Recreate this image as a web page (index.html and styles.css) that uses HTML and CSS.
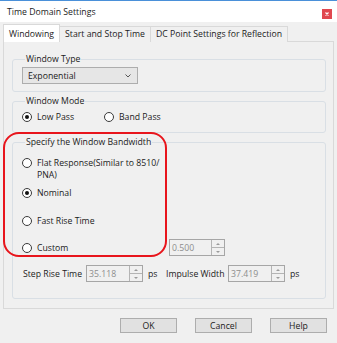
FILE: index.html
```html
<!DOCTYPE html>
<html>
<head>
<meta charset="utf-8">
<link rel="stylesheet" href="styles.css">
</head>
<body>
<div class="dialog">
  <div class="titlebar">
    <span class="title">Time Domain Settings</span>
    <span class="close"><svg width="10" height="10" viewBox="0 0 10 10"><path d="M3.5 3.5L6.5 6.5M6.5 3.5L3.5 6.5" stroke="#fff" stroke-width="1.2"/></svg></span>
  </div>
  <div class="tabs">
    <div class="tab active">Windowing</div>
    <div class="tab">Start and Stop Time</div>
    <div class="tab">DC Point Settings for Reflection</div>
  </div>
  <div class="panel">
    <fieldset class="group g-type">
      <legend>Window Type</legend>
      <div class="select">
        <span>Exponential</span>
        <svg width="6" height="4" viewBox="0 0 6 4"><path d="M0.5 0.5L3 3L5.5 0.5" fill="none" stroke="#555" stroke-width="1"/></svg>
      </div>
    </fieldset>
    <fieldset class="group g-mode">
      <legend>Window Mode</legend>
      <div class="mode-row">
        <div class="radio checked"><span class="circle"></span><span>Low Pass</span></div>
        <div class="radio"><span class="circle"></span><span>Band Pass</span></div>
      </div>
    </fieldset>
    <fieldset class="group g-bw">
      <legend>Specify the Window Bandwidth</legend>
      <div class="radio multi r-flat"><span class="circle"></span><span>Flat Response(Similar to 8510/<br>PNA)</span></div>
      <div class="radio checked r-nominal"><span class="circle"></span><span>Nominal</span></div>
      <div class="radio r-fast"><span class="circle"></span><span>Fast Rise Time</span></div>
      <div class="custom-row">
        <div class="radio r-custom"><span class="circle"></span><span>Custom</span></div>
        <div class="spin w-custom"><span class="val">0.500</span><span class="arrows"><i class="up"></i><i class="down"></i></span></div>
      </div>
      <div class="rise-row">
        <span class="lbl">Step Rise Time</span>
        <div class="spin"><span class="val">35.118</span><span class="arrows"><i class="up"></i><i class="down"></i></span></div>
        <span class="unit">ps</span>
        <span class="lbl">Impulse Width</span>
        <div class="spin"><span class="val">37.419</span><span class="arrows"><i class="up"></i><i class="down"></i></span></div>
        <span class="unit">ps</span>
      </div>
    </fieldset>
  </div>
  <div class="buttons">
    <div class="btn">OK</div>
    <div class="btn">Cancel</div>
    <div class="btn">Help</div>
  </div>
  <div class="highlight"></div>
</div>
</body>
</html>
```
FILE: styles.css
```css
* { box-sizing: border-box; }
html, body { margin: 0; padding: 0; }
body {
  font-family: "Open Sans", "Noto Sans", sans-serif;
  font-size: 8.7px;
  line-height: 12px;
  color: #1b1b1b;
  background: #f0f0f0;
}
.dialog {
  position: relative;
  width: 337px;
  height: 343px;
  background: #f0f0f0;
  border-top: 1px solid #4a90d9;
  display: flex;
  flex-direction: column;
  overflow: hidden;
}
.titlebar {
  height: 21px;
  background: #fff;
  display: flex;
  align-items: flex-start;
  justify-content: space-between;
  padding: 5px 5px 0 7px;
}
.close {
  width: 10px;
  height: 10px;
  margin-top: 3px;
  background: #e0474f;
  display: flex;
}
.tabs {
  display: flex;
  align-items: flex-end;
  margin: 2px 3px -1px 3px;
  position: relative;
  z-index: 1;
}
.tab {
  height: 16px;
  padding: 1px 5px 0 5px;
  border: 1px solid #d9d9d9;
  border-bottom: none;
  border-left: none;
  background: #f0f0f0;
  line-height: 13px;
  white-space: nowrap;
}
.tab.active {
  height: 18px;
  background: #fff;
  border-left: 1px solid #d9d9d9;
  padding-top: 2px;
  line-height: 14px;
}
.panel {
  margin: 0 3px;
  border: 1px solid #d9d9d9;
  padding: 11px 7px 9px 8px;
  background: #f0f0f0;
}
.group {
  margin: 0;
  padding: 0;
  border: 1px solid #d9dfe5;
  border-radius: 3px;
  min-width: 0;
}
.group legend {
  padding: 0 1px;
  margin-left: 3px;
  line-height: 12px;
}
.g-type { padding: 2px 0 7px 9px; }
.select {
  width: 116px;
  height: 17px;
  border: 1px solid #adadad;
  background: #e6e6e6;
  display: flex;
  align-items: center;
  justify-content: space-between;
  padding: 0 6px 0 5px;
}
.g-mode { margin-top: 3px; padding: 4px 0 9px 9px; }
.mode-row { display: grid; grid-template-columns: 82px auto; }
.radio { display: flex; align-items: center; gap: 5px; height: 12px; }
.radio.multi { align-items: flex-start; height: auto; }
.radio.multi .circle { margin-top: 1px; }
.circle {
  width: 10px;
  height: 10px;
  border: 1px solid #3a3a3a;
  border-radius: 50%;
  background: #fff;
  flex: none;
  display: flex;
  align-items: center;
  justify-content: center;
}
.radio.checked .circle::after {
  content: "";
  width: 4px;
  height: 4px;
  border-radius: 50%;
  background: #111;
}
.g-bw { margin-top: 3px; padding: 9px 0 16px 9px; }
.r-nominal { margin-top: 6px; }
.r-fast { margin-top: 16px; }
.custom-row {
  display: flex;
  align-items: center;
  height: 17px;
  margin-top: 12px;
}
.r-custom { width: 147px; }
.spin {
  width: 57px;
  height: 17px;
  border: 1px solid #a6a6a6;
  background: #f0f0f0;
  display: flex;
  align-items: center;
  justify-content: space-between;
  color: #8d8d8d;
}
.spin.w-custom { width: 56px; }
.val { padding-left: 2px; }
.arrows {
  width: 13px;
  height: 15px;
  border-left: 1px solid #b4b4b4;
  display: flex;
  flex-direction: column;
}
.arrows i {
  flex: 1;
  display: flex;
  align-items: center;
  justify-content: center;
}
.arrows i.up { border-bottom: 1px solid #b4b4b4; }
.arrows i::after {
  content: "";
  width: 0;
  height: 0;
  border-left: 2px solid transparent;
  border-right: 2px solid transparent;
}
.arrows i.up::after { border-bottom: 2px solid #9a9a9a; }
.arrows i.down::after { border-top: 2px solid #9a9a9a; }
.rise-row {
  display: grid;
  grid-template-columns: 63px 57px 23px 62px 57px auto;
  align-items: center;
  height: 17px;
  margin-top: 9px;
  padding-left: 1px;
}
.rise-row .unit { padding-left: 5px; }
.buttons {
  display: flex;
  justify-content: flex-end;
  gap: 18px;
  margin-top: 9px;
  padding-right: 10px;
}
.btn {
  width: 57px;
  height: 15px;
  border: 1px solid #adadad;
  background: #e1e1e1;
  display: flex;
  align-items: center;
  justify-content: center;
}
.highlight {
  position: absolute;
  left: 3px;
  top: 131px;
  width: 164px;
  height: 125px;
  border: 2px solid #e8151c;
  border-radius: 16px;
  pointer-events: none;
}
```
